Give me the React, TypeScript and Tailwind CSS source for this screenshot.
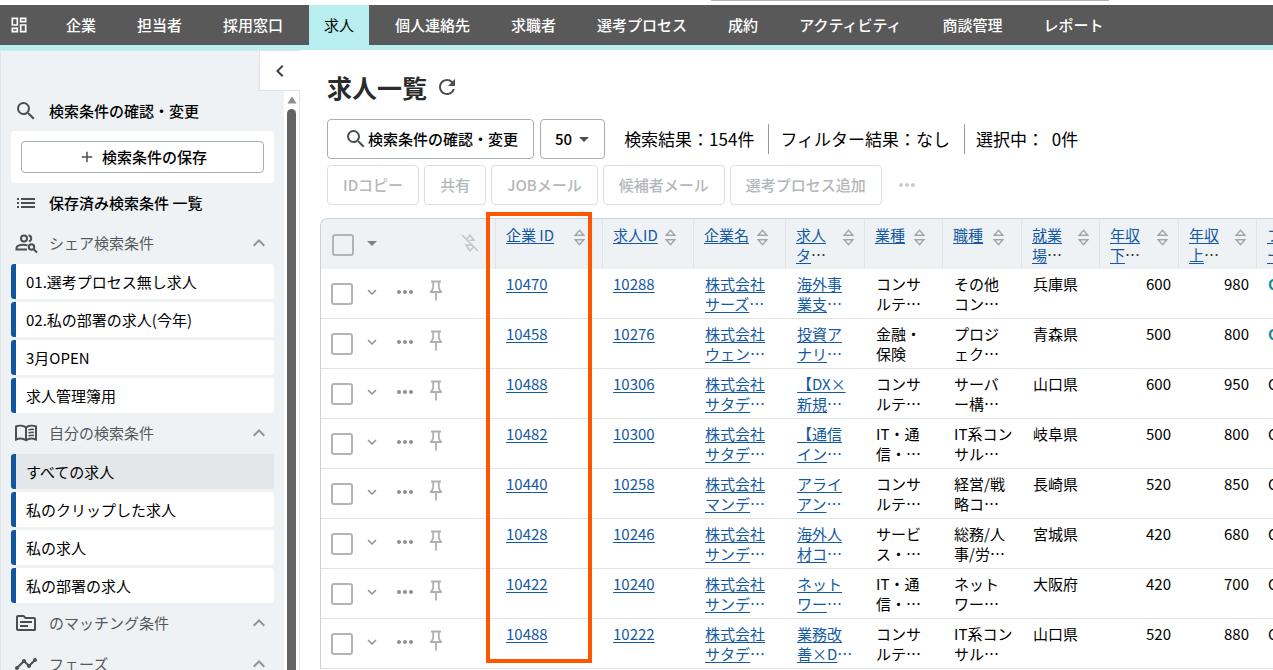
import type { ReactNode } from 'react';
import {
  MdArrowDropDown,
  MdChevronLeft,
  MdKeyboardArrowDown,
  MdKeyboardArrowUp,
  MdAdd,
  MdList,
  MdMoreHoriz,
  MdOutlineDashboard,
  MdOutlineTopic,
  MdRefresh,
  MdSearch,
  MdTimeline,
} from 'react-icons/md';

const NAV = ['企業', '担当者', '採用窓口', '求人', '個人連絡先', '求職者', '選考プロセス', '成約', 'アクティビティ', '商談管理', 'レポート'];

const SHARED = ['01.選考プロセス無し求人', '02.私の部署の求人(今年)', '3月OPEN', '求人管理簿用'];
const MINE = ['すべての求人', '私のクリップした求人', '私の求人', '私の部署の求人'];

const ACTIONS = ['IDコピー', '共有', 'JOBメール', '候補者メール', '選考プロセス追加'];

interface Job {
  companyId: string;
  jobId: string;
  company: string[];
  title: string[];
  industry: string[];
  role: string[];
  place: string;
  min: number;
  max: number;
  fresh?: boolean;
}

const JOBS: Job[] = [
  { companyId: '10470', jobId: '10288', company: ['株式会社', 'サーズ…'], title: ['海外事', '業支…'], industry: ['コンサ', 'ルテ…'], role: ['その他', 'コン…'], place: '兵庫県', min: 600, max: 980, fresh: true },
  { companyId: '10458', jobId: '10276', company: ['株式会社', 'ウェン…'], title: ['投資ア', 'ナリ…'], industry: ['金融・', '保険'], role: ['プロジ', 'ェク…'], place: '青森県', min: 500, max: 800, fresh: true },
  { companyId: '10488', jobId: '10306', company: ['株式会社', 'サタデ…'], title: ['【DX×', '新規…'], industry: ['コンサ', 'ルテ…'], role: ['サーバ', 'ー構…'], place: '山口県', min: 600, max: 950 },
  { companyId: '10482', jobId: '10300', company: ['株式会社', 'サタデ…'], title: ['【通信', 'イン…'], industry: ['IT・通', '信・…'], role: ['IT系コン', 'サル…'], place: '岐阜県', min: 500, max: 800 },
  { companyId: '10440', jobId: '10258', company: ['株式会社', 'マンデ…'], title: ['アライ', 'アン…'], industry: ['コンサ', 'ルテ…'], role: ['経営/戦', '略コ…'], place: '長崎県', min: 520, max: 850 },
  { companyId: '10428', jobId: '10246', company: ['株式会社', 'サンデ…'], title: ['海外人', '材コ…'], industry: ['サービ', 'ス・…'], role: ['総務/人', '事/労…'], place: '宮城県', min: 420, max: 680 },
  { companyId: '10422', jobId: '10240', company: ['株式会社', 'サンデ…'], title: ['ネット', 'ワー…'], industry: ['IT・通', '信・…'], role: ['ネット', 'ワー…'], place: '大阪府', min: 420, max: 700 },
  { companyId: '10488', jobId: '10222', company: ['株式会社', 'サタデ…'], title: ['業務改', '善×D…'], industry: ['コンサ', 'ルテ…'], role: ['IT系コン', 'サル…'], place: '山口県', min: 520, max: 880 },
];

const COLUMNS = [
  { lines: ['企業 ID'], width: 'w-[107px]' },
  { lines: ['求人ID'], width: 'w-[91px]' },
  { lines: ['企業名'], width: 'w-[92px]' },
  { lines: ['求人', 'タ…'], width: 'w-[79px]' },
  { lines: ['業種'], width: 'w-[78px]' },
  { lines: ['職種'], width: 'w-[79px]' },
  { lines: ['就業', '場…'], width: 'w-[78px]' },
  { lines: ['年収', '下…'], width: 'w-[79px]' },
  { lines: ['年収', '上…'], width: 'w-[78px]' },
  { lines: ['フェ', 'ーズ'], width: 'w-[120px]' },
];

function GroupSearchIcon() {
  return (
    <svg viewBox="0 0 24 24" className="h-6 w-6" fill="none" stroke="currentColor" strokeWidth="2">
      <circle cx="10" cy="7.500" r="3" />
      <path d="M14.500 4.400c3.200 0 3.800 4.600.6 6.200" />
      <path d="M13.500 14.200c-3.400-.8-7-.6-9.600.7-.9.500-1.400 1.100-1.400 2V18.500H13" />
      <circle cx="17.500" cy="16" r="2.700" />
      <path d="m19.500 18 3.500 3.500" />
    </svg>
  );
}

function BookIcon() {
  return (
    <svg viewBox="0 0 24 24" className="h-6 w-6" fill="none" stroke="currentColor" strokeWidth="2">
      <path d="M12 6.500C9.500 4.500 5 4.300 2 5.500v13c3-1.200 7.500-1 10 .8 2.500-1.800 7-2 10-.8v-13C19 4.300 14.500 4.500 12 6.500zv12.500" />
      <path d="M14.500 9c1.600-.7 3.600-.9 5.500-.6M14.500 12c1.600-.7 3.600-.9 5.500-.6M14.500 15c1.600-.7 3.600-.9 5.500-.6" strokeWidth="1.500" />
    </svg>
  );
}

function PinIcon() {
  return (
    <svg viewBox="0 0 14 21" className="h-[21px] w-[14px]" fill="none" stroke="currentColor" strokeWidth="1.800">
      <path d="M2 1.500h10M4.200 1.500v6.500l-1.700 3.500M9.800 1.500v6.500l1.700 3.500M1 12h12M7 12v8.500" />
    </svg>
  );
}

function SortIcon() {
  return (
    <svg viewBox="0 0 11 17" className="mt-1 h-[17px] w-[11px] shrink-0 text-[#a3a6a8]" fill="none" stroke="currentColor" strokeWidth="1.400">
      <path d="M5.500 1.300 9.800 6.300H1.200zM5.500 15.700 9.800 10.700H1.200z" />
    </svg>
  );
}

function SortOffIcon() {
  return (
    <svg viewBox="0 0 18 18" className="h-[18px] w-[18px]" fill="none" stroke="currentColor" strokeWidth="1.600">
      <path d="M1 1l16 16M5.500 5.200 9 1.300l4 5H8.500M5 11h5.500l2.200 1.800L9 16.700z" />
    </svg>
  );
}

// the truncation mark stays outside the underlined part
function Lines({ lines, link, dotClass }: { lines: string[]; link?: boolean; dotClass?: string }) {
  return (
    <>
      {lines.map((line, i) => {
        const cut = line.endsWith('…');
        return (
          <span key={i} className="block whitespace-nowrap">
            <span className={link ? 'underline underline-offset-2' : ''}>{cut ? line.slice(0, -1) : line}</span>
            {cut && <span className={dotClass}>…</span>}
          </span>
        );
      })}
    </>
  );
}

function SideSection({ icon, title, items = [], active }: { icon: ReactNode; title: string; items?: string[]; active?: string }) {
  return (
    <section>
      <button className="mt-[3px] mb-1 flex h-[34px] w-full items-center pr-[3px] text-[#55595d]">
        <span className="flex w-[38px] pl-[3px] text-[#4a4f54]">{icon}</span>
        {title}
        <MdKeyboardArrowUp className="ml-auto h-6 w-6 text-[#8d9297]" />
      </button>
      <ul className="flex flex-col gap-[3px]">
        {items.map((item) => (
          <li key={item}>
            <a
              href="#"
              className={`flex h-[35px] items-center rounded-[3px] border-l-[5px] border-[#1155a0] pl-[10px] text-black ${
                item === active ? 'bg-[#e3e7ea]' : 'bg-white'
              }`}
            >
              {item}
            </a>
          </li>
        ))}
      </ul>
    </section>
  );
}

function Sidebar() {
  return (
    <aside className="flex w-[300px] shrink-0 flex-col border-t border-l border-[#dfe3e6] bg-[#eef2f5]">
      <div className="flex h-10 shrink-0 justify-end">
        <button aria-label="閉じる" className="flex w-[41px] items-center justify-center border-b border-l border-[#dfe3e6] bg-white text-[#3d4145]">
          <MdChevronLeft className="h-6 w-6" />
        </button>
      </div>
      <div className="flex min-h-0 flex-1">
        <div className="min-w-0 flex-1 overflow-hidden px-[10px]">
          <a href="#" className="flex h-10 items-center font-medium text-black">
            <span className="flex w-[38px] pl-[3px] text-[#4a4f54]">
              <MdSearch className="h-6 w-6" />
            </span>
            検索条件の確認・変更
          </a>
          <div className="rounded bg-white p-[10px]">
            <button className="flex h-8 w-full items-center justify-center gap-1.5 rounded border border-[#a9aeb3] font-medium text-black">
              <MdAdd className="h-[18px] w-[18px] text-[#4a4f54]" />
              検索条件の保存
            </button>
          </div>
          <a href="#" className="flex h-10 items-center font-medium text-black">
            <span className="flex w-[38px] pl-[3px] text-[#4a4f54]">
              <MdList className="h-6 w-6" />
            </span>
            保存済み検索条件 一覧
          </a>
          <SideSection icon={<GroupSearchIcon />} title="シェア検索条件" items={SHARED} />
          <SideSection icon={<BookIcon />} title="自分の検索条件" items={MINE} active="すべての求人" />
          <SideSection icon={<MdOutlineTopic className="h-6 w-6" />} title="のマッチング条件" />
          <SideSection icon={<MdTimeline className="h-6 w-6" />} title="フェーズ" />
        </div>
        <div className="flex w-4 flex-col items-center border-r border-[#dfe3e6] bg-white pt-[5px]">
          <svg viewBox="0 0 10 8" className="h-2 w-[10px]" fill="#8b8b8b">
            <path d="M5 0.500 9.500 7.500H0.500z" />
          </svg>
          <div className="mt-[5px] w-[9px] flex-1 rounded-t-full bg-[#636363]" />
        </div>
      </div>
    </aside>
  );
}

function Checkbox({ label }: { label: string }) {
  return <input type="checkbox" aria-label={label} className="h-[22px] w-[22px] shrink-0 appearance-none rounded-[3px] border-2 border-[#b3b3b3] bg-transparent" />;
}

function JobTable() {
  return (
    <div className="relative mt-[13px] ml-5">
      <div className="overflow-hidden rounded-tl-lg border-t border-l border-[#cdd1d4]">
        <table className="w-[1055px] table-fixed border-separate border-spacing-0 text-left">
          <thead>
            <tr className="h-[50px] bg-[#eef2f5] align-top">
              <th className="w-[174px] font-normal">
                <div className="flex items-start pt-[15px] pl-[11px]">
                  <Checkbox label="すべて選択" />
                  <MdArrowDropDown className="-mt-[3px] ml-1.5 h-6 w-6 text-[#7d8388]" />
                  <span className="mr-4 ml-auto text-[#c3c6c9]">
                    <SortOffIcon />
                  </span>
                </div>
              </th>
              {COLUMNS.map((col, i) => (
                <th key={i} className={`${col.width} border-l border-[#e0e4e7] font-normal`}>
                  <div className={`flex justify-between pt-1.5 pl-[10px] ${col.lines.length > 1 ? 'pr-[10px]' : 'pr-[17px]'}`}>
                    <a href="#" className="text-[#1459a3]">
                      <Lines lines={col.lines} link dotClass="text-[#333]" />
                    </a>
                    <SortIcon />
                  </div>
                </th>
              ))}
            </tr>
          </thead>
          <tbody className="[&_td]:border-b [&_td]:border-[#e1e3e5]">
            {JOBS.map((job, i) => (
              <tr key={i} className="h-[50px] align-top text-black">
                <td>
                  <div className="flex items-start pt-[14px] pl-[10px] text-[#8b9196]">
                    <Checkbox label={`求人 ${job.jobId} を選択`} />
                    <button aria-label="開く" className="ml-[10px]">
                      <MdKeyboardArrowDown className="h-[18px] w-[18px]" />
                    </button>
                    <button aria-label="メニュー" className="-mt-[3px] ml-3">
                      <MdMoreHoriz className="h-6 w-6" />
                    </button>
                    <button aria-label="固定" className="-mt-[3px] ml-3 text-[#b0b0b0]">
                      <PinIcon />
                    </button>
                  </div>
                </td>
                <td className="pt-[5px] pl-[11px] text-[#1459a3]"><a href="#"><Lines lines={[job.companyId]} link /></a></td>
                <td className="pt-[5px] pl-[11px] text-[#1459a3]"><a href="#"><Lines lines={[job.jobId]} link /></a></td>
                <td className="pt-[5px] pl-3 text-[#1459a3]"><a href="#"><Lines lines={job.company} link /></a></td>
                <td className="pt-[5px] pl-3 text-[#1459a3]"><a href="#"><Lines lines={job.title} link /></a></td>
                <td className="pt-[5px] pl-3"><Lines lines={job.industry} /></td>
                <td className="pt-[5px] pl-3"><Lines lines={job.role} /></td>
                <td className="pt-[5px] pl-3">{job.place}</td>
                <td className="pt-[5px] pr-[7px] text-right">{job.min}</td>
                <td className="pt-[5px] pr-[7px] text-right">{job.max}</td>
                <td className={`pt-[5px] pl-3 ${job.fresh ? 'font-bold text-[#0e8f96]' : ''}`}>OPEN</td>
              </tr>
            ))}
          </tbody>
        </table>
      </div>
      <div className="pointer-events-none absolute -top-1.5 left-[166px] h-[451px] w-[106px] border-4 border-[#ff5500]" />
    </div>
  );
}

export default function App() {
  return (
    <div
      lang="ja"
      className="flex h-screen flex-col overflow-hidden bg-white font-['Noto_Sans_CJK_JP',sans-serif] text-[15px] leading-5 text-black"
    >
      <div className="flex h-[5px] shrink-0 justify-center pl-[546px]">
        <div className="h-px w-[398px] bg-[#aeb3b7]" />
      </div>
      <nav className="flex h-[45px] shrink-0 gap-[11px] border-b-[5px] border-[#b9eef0] bg-[#595959] whitespace-nowrap text-white">
        <a href="#" aria-label="ダッシュボード" className="flex w-10 items-center pl-[9px]">
          <MdOutlineDashboard className="h-5 w-5" />
        </a>
        {NAV.map((item) => (
          <a
            key={item}
            href="#"
            className={`flex items-center px-[15px] ${item === '求人' ? 'bg-[#b9eef0] text-black' : 'font-medium'}`}
          >
            {item}
          </a>
        ))}
      </nav>

      <div className="flex min-h-0 flex-1">
        <Sidebar />
        <main className="min-w-0 flex-1 overflow-hidden">
          <div className="flex flex-col pt-5 pl-[27px]">
            <div className="flex h-[34px] items-center gap-2">
              <h1 className="text-[25px] font-bold text-[#2b2b2b]">求人一覧</h1>
              <button aria-label="更新" className="text-[#4a4f54]">
                <MdRefresh className="h-6 w-6" />
              </button>
            </div>

            <div className="mt-[15px] flex items-center gap-[6px]">
              <button className="flex h-10 items-center rounded border border-[#a9aeb3] pr-[15px] pl-4 font-medium">
                <MdSearch className="h-6 w-6 text-[#4a4f54]" />
                検索条件の確認・変更
              </button>
              <button className="flex h-10 items-center rounded border border-[#a9aeb3] pr-2 pl-[14px] font-medium">
                50
                <MdArrowDropDown className="h-6 w-6 text-[#4a4f54]" />
              </button>
              <div className="flex pl-[2px] text-[17px] leading-[30px] whitespace-nowrap">
                <span className="pr-[14px] pl-[11px]">検索結果：154件</span>
                <span className="border-l border-[#999] pr-[14px] pl-[11px]">フィルター結果：なし</span>
                <span className="border-l border-[#999] pl-[11px]">選択中：&nbsp; 0件</span>
              </div>
            </div>

            <div className="mt-1.5 flex items-center gap-[5px]">
              {ACTIONS.map((action) => (
                <button key={action} disabled className="h-10 rounded border border-[#dcdfe2] px-[15px] font-medium whitespace-nowrap text-[#b4b7ba]">
                  {action}
                </button>
              ))}
              <button disabled aria-label="その他" className="ml-2 text-[#c9cbcd]">
                <MdMoreHoriz className="h-6 w-6" />
              </button>
            </div>
          </div>
          <JobTable />
        </main>
      </div>
    </div>
  );
}
